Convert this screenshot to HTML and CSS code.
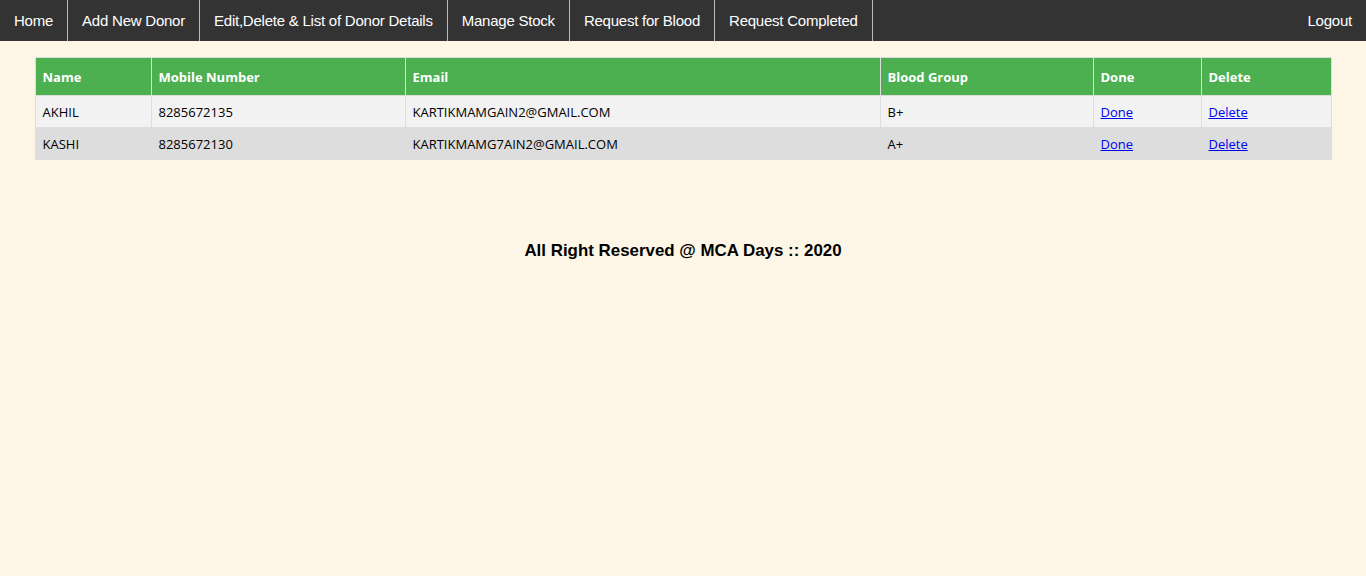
FILE: index.html
```html
<!DOCTYPE html>
<html>
<head>
<meta charset="utf-8">
<title>Blood Bank</title>
<link rel="stylesheet" href="styles.css">
</head>
<body>
<nav class="topnav">
  <a href="#" class="nav-item">Home</a>
  <a href="#" class="nav-item">Add New Donor</a>
  <a href="#" class="nav-item">Edit,Delete &amp; List of Donor Details</a>
  <a href="#" class="nav-item">Manage Stock</a>
  <a href="#" class="nav-item">Request for Blood</a>
  <a href="#" class="nav-item">Request Completed</a>
  <a href="#" class="nav-item nav-right">Logout</a>
</nav>
<main class="content">
  <table class="donors">
    <thead>
      <tr>
        <th class="c1">Name</th>
        <th class="c2">Mobile Number</th>
        <th class="c3">Email</th>
        <th class="c4">Blood Group</th>
        <th class="c5">Done</th>
        <th class="c6">Delete</th>
      </tr>
    </thead>
    <tbody>
      <tr>
        <td>AKHIL</td>
        <td>8285672135</td>
        <td>KARTIKMAMGAIN2@GMAIL.COM</td>
        <td>B+</td>
        <td><a href="#">Done</a></td>
        <td><a href="#">Delete</a></td>
      </tr>
      <tr>
        <td>KASHI</td>
        <td>8285672130</td>
        <td>KARTIKMAMG7AIN2@GMAIL.COM</td>
        <td>A+</td>
        <td><a href="#">Done</a></td>
        <td><a href="#">Delete</a></td>
      </tr>
    </tbody>
  </table>
  <footer class="footer">All Right Reserved @ MCA Days :: 2020</footer>
</main>
</body>
</html>
```

FILE: styles.css
```css
html, body {
  margin: 0;
  padding: 0;
  background: #fdf5e6;
}

.topnav {
  display: flex;
  background: #333333;
  height: 41px;
}

.nav-item {
  display: block;
  color: #ffffff;
  text-decoration: none;
  font-family: "Liberation Sans", Arial, sans-serif;
  font-size: 15px;
  letter-spacing: -0.23px;
  line-height: 41px;
  padding: 0 14px;
  border-right: 1px solid #bbbbbb;
}

.nav-right {
  margin-left: auto;
  border-right: none;
}

.content {
  padding-top: 16px;
}

.donors {
  width: 1297px;
  margin: 0 auto;
  border-collapse: collapse;
  font-family: "Open Sans", sans-serif;
  font-size: 13px;
  color: #000;
}

.donors th, .donors td {
  border: 1px solid #dddddd;
  text-align: left;
  padding: 0 7px;
}

.donors th {
  background: #4caf50;
  color: #ffffff;
  font-weight: bold;
  height: 37px;
}

.donors td {
  height: 31px;
}

.donors tbody tr:nth-child(odd) {
  background: #f2f2f2;
}

.donors tbody tr:nth-child(even) {
  background: #dddddd;
}

.donors a {
  color: #0000ee;
}

.c1 { width: 101px; }
.c2 { width: 239px; }
.c3 { width: 460px; }
.c4 { width: 198px; }
.c5 { width: 93px; }

.footer {
  text-align: center;
  font-family: "Liberation Sans", Arial, sans-serif;
  font-weight: bold;
  font-size: 16.9px;
  margin-top: 81px;
}
```
